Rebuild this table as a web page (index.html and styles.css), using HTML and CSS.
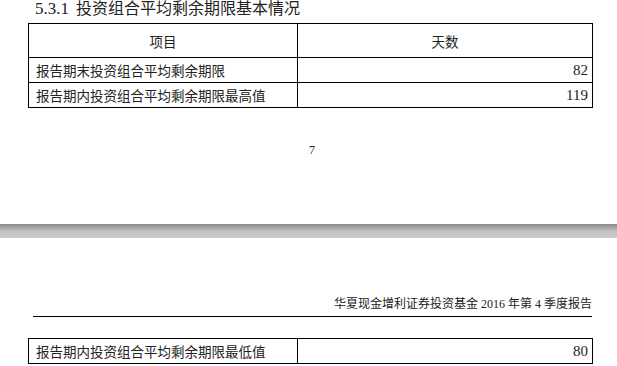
FILE: index.html
```html
<!DOCTYPE html>
<html lang="zh">
<head>
<meta charset="utf-8">
<title>5.3.1 投资组合平均剩余期限基本情况</title>
<link rel="stylesheet" href="styles.css">
</head>
<body>
<section class="sheet sheet-top">
  <h3 class="title"><span class="num">5.3.1</span> 投资组合平均剩余期限基本情况</h3>
  <table class="grid">
    <tr class="head">
      <th class="c1">项目</th>
      <th class="c2">天数</th>
    </tr>
    <tr class="row">
      <td class="c1">报告期末投资组合平均剩余期限</td>
      <td class="c2 val">82</td>
    </tr>
    <tr class="row">
      <td class="c1">报告期内投资组合平均剩余期限最高值</td>
      <td class="c2 val">119</td>
    </tr>
  </table>
  <div class="pagenum">7</div>
</section>
<div class="divider"></div>
<section class="sheet sheet-bottom">
  <div class="running-head">华夏现金增利证券投资基金 <span class="lat">2016</span> 年第 <span class="lat">4</span> 季度报告</div>
  <table class="grid">
    <tr class="row">
      <td class="c1">报告期内投资组合平均剩余期限最低值</td>
      <td class="c2 val">80</td>
    </tr>
  </table>
</section>
</body>
</html>
```
FILE: styles.css
```css
html, body {
  margin: 0;
  padding: 0;
  background: #fff;
}
body {
  width: 617px;
  height: 366px;
  overflow: hidden;
  font-family: "Liberation Serif", "Noto Sans CJK SC", serif;
  color: #111;
}
.sheet-top {
  padding-top: 0;
  height: 224px;
}
.title {
  margin: 0 0 0 35px;
  height: 23px;
  font-size: 16px;
  font-weight: normal;
  line-height: 18px;
  color: #222;
}
.title .num {
  font-family: "Liberation Serif", serif;
  font-size: 17px;
  margin-right: 3px;
}
.grid {
  margin-left: 28px;
  width: 565px;
  border-collapse: collapse;
  font-size: 13.5px;
  color: #222;
}
.grid td, .grid th {
  border: 1px solid #000;
  padding: 0;
  font-weight: normal;
}
.grid .c1 {
  width: 264px;
  padding-left: 7px;
  text-align: left;
}
.grid .c2 {
  width: 293px;
}
.grid .head th {
  height: 33px;
  text-align: center;
  padding-left: 0;
}
.grid .row td {
  height: 24px;
}
.grid .val {
  text-align: right;
  padding-right: 4px;
  font-family: "Liberation Serif", serif;
  font-size: 15px;
}
.pagenum {
  margin-top: 35px;
  padding-left: 7px;
  text-align: center;
  font-size: 12px;
  line-height: 14px;
  color: #222;
}
.divider {
  height: 14px;
  background: linear-gradient(to bottom, #8c8c8c 0%, #a4a4a4 25%, #c4c4c4 55%, #cdcdcd 100%);
}
.sheet-bottom {
  padding-top: 58px;
}
.running-head {
  margin-left: 33px;
  width: 559px;
  text-align: right;
  font-size: 12px;
  line-height: 16px;
  padding-bottom: 4px;
  border-bottom: 1px solid #000;
  color: #222;
}
.running-head .lat {
  font-family: "Liberation Serif", serif;
}
.sheet-bottom .grid {
  margin-top: 21px;
}
```
